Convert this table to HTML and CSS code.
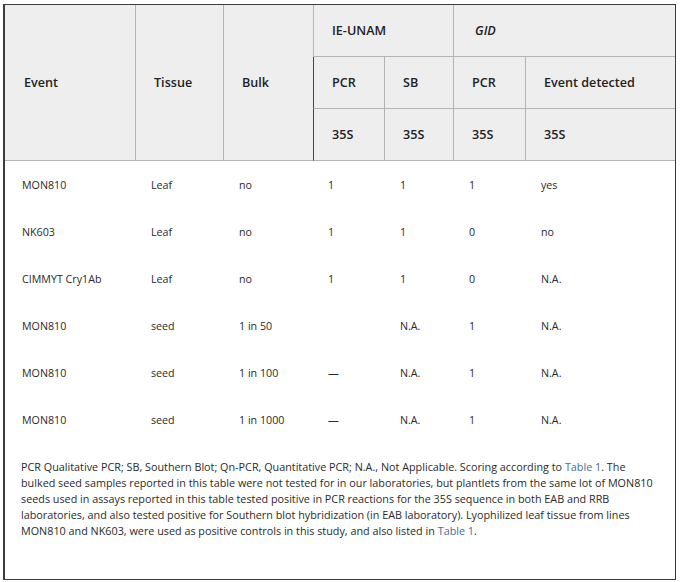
FILE: index.html
```html
<!DOCTYPE html>
<html>
<head>
<meta charset="utf-8">
<link rel="stylesheet" href="styles.css">
</head>
<body>
<div class="frame">
  <table class="data">
    <colgroup>
      <col class="c1"><col class="c2"><col class="c3"><col class="c4"><col class="c5"><col class="c6"><col class="c7">
    </colgroup>
    <thead>
      <tr class="hr">
        <th rowspan="3" class="sep">Event</th>
        <th rowspan="3" class="sep">Tissue</th>
        <th rowspan="3" class="nosep">Bulk</th>
        <th colspan="2" class="grp lft">IE-UNAM</th>
        <th colspan="2" class="grp last"><em>GID</em></th>
      </tr>
      <tr class="hr">
        <th class="sub dark">PCR</th>
        <th class="sub">SB</th>
        <th class="sub">PCR</th>
        <th class="sub last">Event detected</th>
      </tr>
      <tr class="hr">
        <th class="sub dark">35S</th>
        <th class="sub">35S</th>
        <th class="sub">35S</th>
        <th class="sub last">35S</th>
      </tr>
    </thead>
    <tbody>
      <tr><td>MON810</td><td>Leaf</td><td>no</td><td>1</td><td>1</td><td>1</td><td>yes</td></tr>
      <tr><td>NK603</td><td>Leaf</td><td>no</td><td>1</td><td>1</td><td>0</td><td>no</td></tr>
      <tr><td>CIMMYT Cry1Ab</td><td>Leaf</td><td>no</td><td>1</td><td>1</td><td>0</td><td>N.A.</td></tr>
      <tr><td>MON810</td><td>seed</td><td>1 in 50</td><td></td><td>N.A.</td><td>1</td><td>N.A.</td></tr>
      <tr><td>MON810</td><td>seed</td><td>1 in 100</td><td>—</td><td>N.A.</td><td>1</td><td>N.A.</td></tr>
      <tr><td>MON810</td><td>seed</td><td>1 in 1000</td><td>—</td><td>N.A.</td><td>1</td><td>N.A.</td></tr>
    </tbody>
  </table>
  <p class="note">PCR Qualitative PCR; SB, Southern Blot; Qn-PCR, Quantitative PCR; N.A., Not Applicable. Scoring according to <a class="ref" href="#">Table 1</a>. The bulked seed samples reported in this table were not tested for in our laboratories, but plantlets from the same lot of MON810 seeds used in assays reported in this table tested positive in PCR reactions for the 35S sequence in both EAB and RRB laboratories, and also tested positive for Southern blot hybridization (in EAB laboratory). Lyophilized leaf tissue from lines MON810 and NK603, were used as positive controls in this study, and also listed in <a class="ref" href="#">Table 1</a>.</p>
</div>
</body>
</html>
```

FILE: styles.css
```css
html, body {
  margin: 0;
  padding: 0;
  background: #ffffff;
}

body {
  font-family: "Open Sans", "Liberation Sans", sans-serif;
  color: #222222;
}

.frame {
  margin: 4px 0 0 3px;
  width: 670px;
  border: 1px solid #3c3c3c;
  border-left-width: 2px;
  height: 574px;
}

.data {
  width: 670px;
  table-layout: fixed;
  border-collapse: separate;
  border-spacing: 0;
}

.c1 { width: 131px; }
.c2 { width: 88px; }
.c3 { width: 89px; }
.c4 { width: 72px; }
.c5 { width: 69px; }
.c6 { width: 72px; }
.c7 { width: 149px; }

.hr { height: 52px; }

th {
  background: #eeeeee;
  font-size: 12.6px;
  font-weight: 600;
  text-align: left;
  vertical-align: middle;
  padding: 0 0 0 18px;
  color: #222222;
  border-bottom: 1px solid #b4b4b4;
  border-right: 1px solid #b4b4b4;
}

th.sep:first-child { padding-left: 19px; }
th.nosep { border-right: none; }
th.lft { border-left: 1px solid #b4b4b4; }
th.last { border-right: none; }
th.dark { border-left: 1px solid #444444; }
th.grp em { font-style: italic; padding-left: 3px; }

tbody tr { height: 47px; }

td {
  font-size: 10.7px;
  color: #2a2a2a;
  padding: 0 0 0 15px;
  vertical-align: middle;
  white-space: nowrap;
}

td:first-child { padding-left: 17px; }

.note {
  margin: 0;
  padding: 16px 15px 0 16px;
  font-size: 10.8px;
  line-height: 16px;
  color: #2a2a2a;
}

.ref {
  color: #4a6c9b;
  text-decoration: none;
}
```
